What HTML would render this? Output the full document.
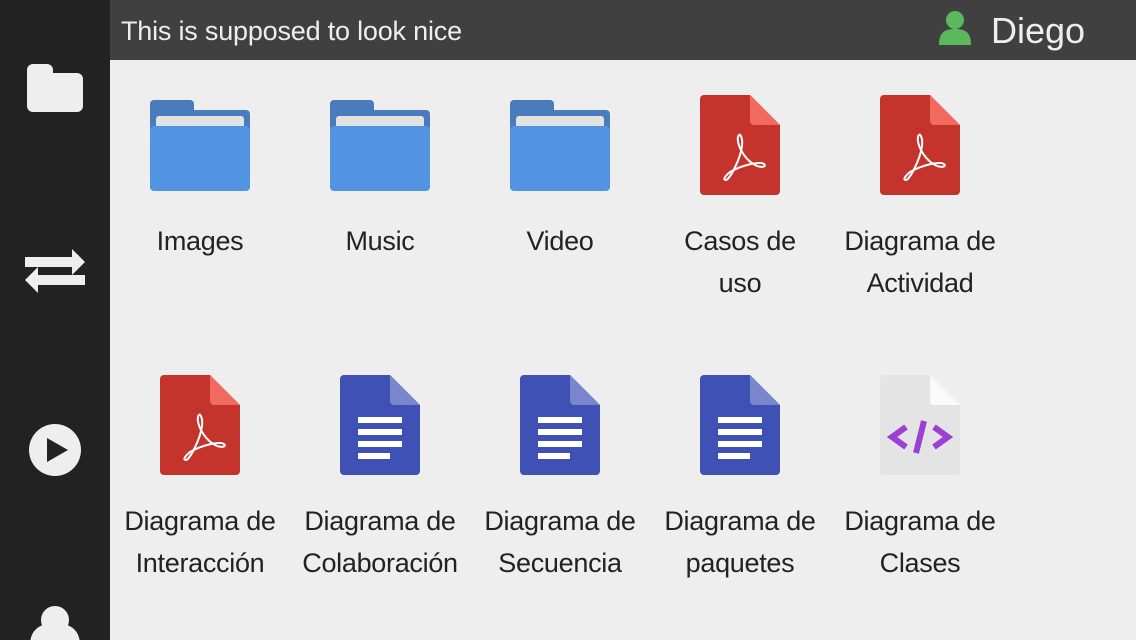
<!DOCTYPE html>
<html><head><style>
body{margin:0;width:1136px;height:640px;overflow:hidden;background:#eeeeee;font-family:"Liberation Sans","DejaVu Sans",sans-serif;position:relative}
#side{position:absolute;left:0;top:0;width:110px;height:640px;background:#222}
#head{position:absolute;left:110px;top:0;width:1026px;height:60px;background:#404040;color:#eee}
#head .t{position:absolute;left:11px;top:16px;font-size:27px;letter-spacing:-0.2px}
#head .u{position:absolute;left:881px;top:10px;font-size:36px}
.cell{position:absolute;width:180px;text-align:center;font-size:27px;color:#222;line-height:42px;letter-spacing:-0.3px}
.cell svg{position:absolute;left:40px}
.cell .l{position:absolute;left:0;width:180px}
</style></head><body>
<div id="side">
<svg width="110" height="640" style="position:absolute;left:0;top:0">
<path d="M27 70a6 6 0 0 1 6-6h14a6 6 0 0 1 6 6v3h24a6 6 0 0 1 6 6v27a6 6 0 0 1-6 6H33a6 6 0 0 1-6-6z" fill="#eee"/>
<path d="M25 257h47v-8l13 13-13 13v-8H25z" fill="#eee"/>
<path d="M85 275H38v-8l-13 13 13 13v-8h47z" fill="#eee"/>
<circle cx="55" cy="450" r="26" fill="#eee"/>
<path d="M47 438v24l21-12z" fill="#222"/>
<circle cx="55" cy="620" r="15" fill="#eee" stroke="#222" stroke-width="2"/>
<path d="M30 645c0-15 10-22 25-22s25 7 25 22z" fill="#eee"/>
</svg>
</div>
<div id="head"><span class="t">This is supposed to look nice</span>
<svg width="34" height="36" style="position:absolute;left:828px;top:11px"><circle cx="17" cy="9" r="9" fill="#5cb85c"/><path d="M1 34c0-13 6-16 16-16s16 3 16 16z" fill="#5cb85c"/></svg>
<span class="u">Diego</span></div>

<svg width="0" height="0" style="position:absolute"><defs>
<g id="fold"><rect x="0" y="0" width="44" height="20" rx="4" fill="#4a7bbd"/><rect x="0" y="10" width="100" height="80" rx="4" fill="#4a7bbd"/><rect x="6" y="16" width="88" height="20" rx="3" fill="#e2e2e2"/><rect x="0" y="26" width="100" height="65" rx="4" fill="#5294e2"/></g>
<g id="pdf"><path d="M4 0h46l30 30v66a4 4 0 0 1-4 4H4a4 4 0 0 1-4-4V4a4 4 0 0 1 4-4z" fill="#c4342d"/><path d="M50 0l30 30H54a4 4 0 0 1-4-4z" fill="#f06a5f"/><path d="M39 40c-4 4 2 22 16 30 6 3 12 2 9-1-4-3-22 1-34 8-6 5-7 8-4 8 4-1 14-20 16-34 1-8-2-13-3-11z" fill="none" stroke="#fff" stroke-width="2"/></g>
<g id="doc"><path d="M4 0h46l30 30v66a4 4 0 0 1-4 4H4a4 4 0 0 1-4-4V4a4 4 0 0 1 4-4z" fill="#3f51b5"/><path d="M50 0l30 30H54a4 4 0 0 1-4-4z" fill="#7986cb"/><rect x="18" y="42" width="44" height="6" fill="#fff"/><rect x="18" y="54" width="44" height="6" fill="#fff"/><rect x="18" y="66" width="44" height="6" fill="#fff"/><rect x="18" y="78" width="32" height="6" fill="#fff"/></g>
</defs></svg>

<div class="cell" style="left:110px;top:0"><svg width="100" height="92" style="top:100px"><use href="#fold"/></svg><div class="l" style="top:220px">Images</div></div>
<div class="cell" style="left:290px;top:0"><svg width="100" height="92" style="top:100px"><use href="#fold"/></svg><div class="l" style="top:220px">Music</div></div>
<div class="cell" style="left:470px;top:0"><svg width="100" height="92" style="top:100px"><use href="#fold"/></svg><div class="l" style="top:220px">Video</div></div>
<div class="cell" style="left:650px;top:0"><svg width="80" height="100" style="top:95px;left:50px"><use href="#pdf"/></svg><div class="l" style="top:220px">Casos de<br>uso</div></div>
<div class="cell" style="left:830px;top:0"><svg width="80" height="100" style="top:95px;left:50px"><use href="#pdf"/></svg><div class="l" style="top:220px">Diagrama de<br>Actividad</div></div>

<div class="cell" style="left:110px;top:0"><svg width="80" height="100" style="top:375px;left:50px"><use href="#pdf"/></svg><div class="l" style="top:500px">Diagrama de<br>Interacción</div></div>
<div class="cell" style="left:290px;top:0"><svg width="80" height="100" style="top:375px;left:50px"><use href="#doc"/></svg><div class="l" style="top:500px">Diagrama de<br>Colaboración</div></div>
<div class="cell" style="left:470px;top:0"><svg width="80" height="100" style="top:375px;left:50px"><use href="#doc"/></svg><div class="l" style="top:500px">Diagrama de<br>Secuencia</div></div>
<div class="cell" style="left:650px;top:0"><svg width="80" height="100" style="top:375px;left:50px"><use href="#doc"/></svg><div class="l" style="top:500px">Diagrama de<br>paquetes</div></div>
<div class="cell" style="left:830px;top:0"><svg width="80" height="100" style="top:375px;left:50px"><path d="M4 0h46l30 30v66a4 4 0 0 1-4 4H4a4 4 0 0 1-4-4V4a4 4 0 0 1 4-4z" fill="#e4e4e4"/><path d="M50 0l30 30H54a4 4 0 0 1-4-4z" fill="#fafafa"/><path d="M26 52l-14 10 14 10M54 52l14 10-14 10M44 46l-8 32" fill="none" stroke="#9b3fd6" stroke-width="6"/></svg><div class="l" style="top:500px">Diagrama de<br>Clases</div></div>
</body></html>
